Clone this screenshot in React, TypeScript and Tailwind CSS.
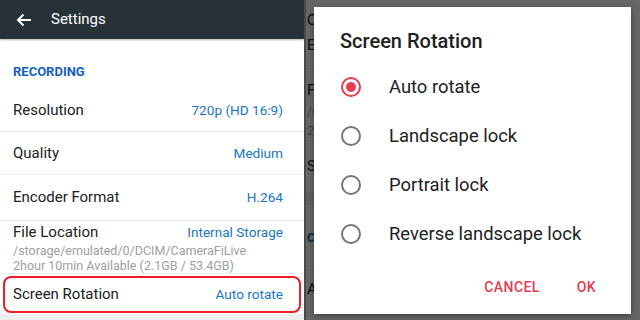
import React from "react";

type Row = { label: string; value: string };

function SettingRow({ label, value, h }: Row & { h: string }) {
    return (
        <div className={`flex items-center justify-between border-b border-[#ececec] pl-[13px] pr-[21px] ${h}`}>
            <span className="text-[15px] text-[#212121]">{label}</span>
            <span className="text-[13.6px] text-[#1b76c2]">{value}</span>
        </div>
    );
}

function LeftPanel() {
    return (
        <div className="flex h-[320px] w-[304px] flex-col bg-white">
            <div className="flex h-[39px] shrink-0 items-center bg-[#263238] shadow-[0_1px_2px_rgba(0,0,0,0.3)]">
                <svg width="16" height="14" viewBox="0 0 16 14" className="ml-[16px]">
                    <path d="M15 7H2M7.5 1.5 2 7l5.5 5.5" fill="none" stroke="white" strokeWidth="2" />
                </svg>
                <span className="ml-[19px] text-[15px] text-white">Settings</span>
            </div>
            <div className="flex h-[50px] shrink-0 items-center pl-[13px] pt-[16px]">
                <span className="text-[13px] font-bold text-[#1560bd]">RECORDING</span>
            </div>
            <SettingRow label="Resolution" value="720p (HD 16:9)" h="h-[43px]" />
            <SettingRow label="Quality" value="Medium" h="h-[43px]" />
            <SettingRow label="Encoder Format" value="H.264" h="h-[46px]" />
            <div className="flex h-[53px] flex-col border-b border-[#ececec] pl-[13px] pr-[21px]">
                <div className="flex items-center justify-between leading-[22px]">
                    <span className="text-[15px] text-[#212121]">File Location</span>
                    <span className="text-[13.6px] text-[#1b76c2]">Internal Storage</span>
                </div>
                <span className="text-[12.5px] leading-[16px] text-[#9e9e9e]">/storage/emulated/0/DCIM/CameraFiLive</span>
                <span className="text-[12.5px] leading-[14px] text-[#9e9e9e]">2hour 10min Available (2.1GB / 53.4GB)</span>
            </div>
            <div className="flex h-[40px] items-center px-[3px]">
                <div className="flex h-[37px] w-full items-center justify-between rounded-[8px] border-2 border-[#ee1c24] pl-[8px] pr-[16px]">
                    <span className="text-[15px] text-[#212121]">Screen Rotation</span>
                    <span className="text-[13.6px] text-[#1b76c2]">Auto rotate</span>
                </div>
            </div>
            <div className="flex-1 bg-[#eeeeee]" />
        </div>
    );
}

function Radio({ checked }: { checked?: boolean }) {
    return (
        <span
            className={`flex h-[20px] w-[20px] shrink-0 items-center justify-center rounded-full border-2 ${
                checked ? "border-[#ea3b50]" : "border-[#757575]"
            }`}
        >
            {checked ? <span className="h-[10px] w-[10px] rounded-full bg-[#ea3b50]" /> : null}
        </span>
    );
}

function RightPanel() {
    const options = ["Auto rotate", "Landscape lock", "Portrait lock", "Reverse landscape lock"];
    return (
        <div className="relative h-[320px] flex-1 overflow-hidden bg-white">
            {/* underlying screen, scrolled; only a sliver shows beside the dialog */}
            <div className="flex w-[8px] flex-col overflow-hidden whitespace-nowrap text-[15px] text-[#212121]">
                <div className="flex h-[23px] items-end border-b border-[#ececec] pl-[1px]">
                    <span className="-mb-[9px]">Q</span>
                </div>
                <div className="flex h-[46px] items-center border-b border-[#ececec] pl-[1px]">E</div>
                <div className="flex h-[72px] flex-col border-b border-[#ececec] pl-[1px] pt-[10px]">
                    <span>F</span>
                    <span className="text-[12px] leading-[20px] text-[#9e9e9e]">/s</span>
                    <span className="text-[12px] leading-[18px] text-[#9e9e9e]">2</span>
                </div>
                <div className="flex h-[50px] items-center pl-[1px]">S</div>
                <div className="h-[14px] bg-[#eeeeee]" />
                <div className="flex h-[62px] items-center border-b border-[#ececec] pl-[1px] pt-[4px]">
                    <span className="text-[13px] font-bold text-[#1560bd]">C</span>
                </div>
                <div className="flex h-[46px] items-center border-b border-[#ececec] pl-[1px]">A</div>
            </div>
            <div className="absolute inset-0 bg-black/60" />
            <div className="absolute left-[8px] top-[7px] flex h-[307px] w-[317px] flex-col bg-white shadow-[0_2px_6px_rgba(0,0,0,0.4)]">
                <div className="flex h-[55px] items-center pl-[26px] pt-[12px]">
                    <span className="text-[20px] font-medium text-[#212121]">Screen Rotation</span>
                </div>
                {options.map((o, i) => (
                    <div key={o} className="flex h-[49px] items-center pl-[27px]">
                        <Radio checked={i === 0} />
                        <span className="ml-[28px] text-[18.4px] text-[#212121]">{o}</span>
                    </div>
                ))}
                <div className="flex flex-1 items-center justify-end gap-[37px] pr-[35px] pt-[2px]">
                    <span className="text-[14px] font-medium tracking-[0.4px] text-[#e63c52]">CANCEL</span>
                    <span className="text-[14px] font-medium tracking-[0.4px] text-[#e63c52]">OK</span>
                </div>
            </div>
        </div>
    );
}

export default function App() {
    return (
        <div className="flex h-[320px] w-[640px] font-['Roboto',sans-serif]">
            <LeftPanel />
            <div className="w-[2px] bg-[#4a4a4a]" />
            <RightPanel />
        </div>
    );
}
